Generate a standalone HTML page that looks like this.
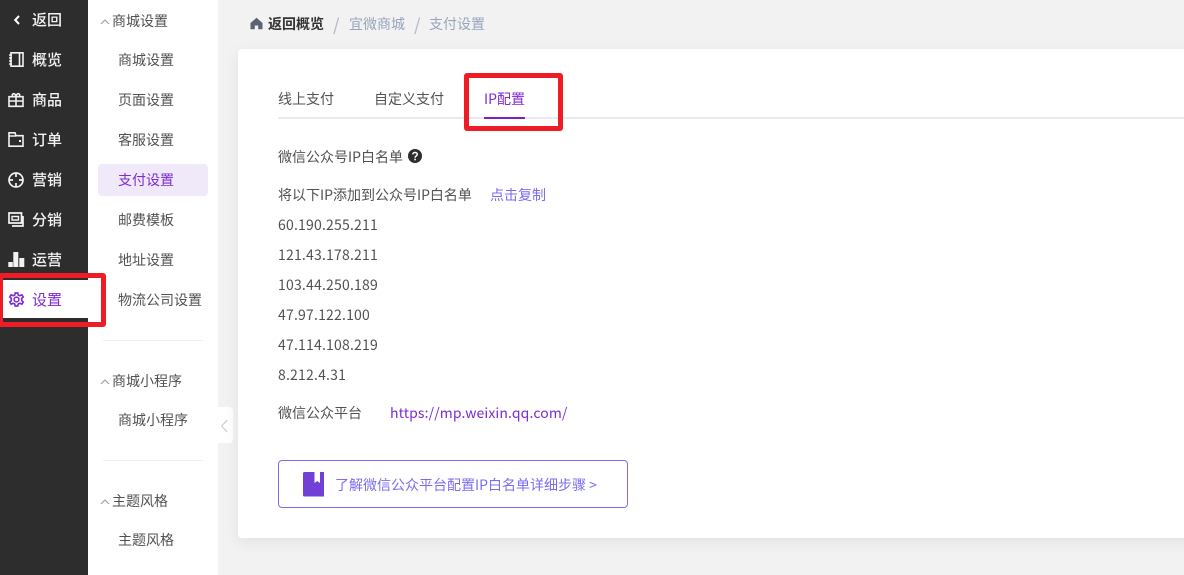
<!DOCTYPE html>
<html lang="zh"><head><meta charset="utf-8"><title>IP配置</title>
<style>
*{box-sizing:border-box}
html,body{margin:0;padding:0}
body{width:1184px;height:575px;position:relative;overflow:hidden;background:#f2f2f2;font-family:"Noto Sans CJK SC","Liberation Sans",sans-serif;font-size:14px;color:#515a6e}
.a{position:absolute;white-space:nowrap;line-height:20px}
.side{position:absolute;left:0;top:0;width:88px;height:575px;background:#2d2d2d}
.sub{position:absolute;left:88px;top:0;width:130px;height:575px;background:#fff}
.m{color:#f4f4f4;left:32px;font-size:15px;font-weight:500}
.s{color:#515151;left:118px}
.h{color:#515151;left:112px}
.ic{position:absolute;overflow:visible}
.card{position:absolute;left:238px;top:49px;width:960px;height:489px;background:#fff;border-radius:4px;box-shadow:0 4px 16px rgba(0,0,0,.07)}
.t{color:#515151}
.ip{color:#515151;left:278px;letter-spacing:.2px}
.red{position:absolute;border:5px solid #ee1c25;border-radius:3px}
</style></head><body>
<div class="side"></div>
<div class="sub"></div>

<svg class="ic" style="left:13px;top:15px" width="8" height="10" viewBox="0 0 8 10"><path d="M6 1L2.200 5L6 9" fill="none" stroke="#fff" stroke-width="2"/></svg>
<div class="a m" style="top:10px">返回</div>

<svg class="ic" style="left:8px;top:52px" width="16" height="15" viewBox="0 0 16 15"><path d="M3 .8H15V14.200H3ZM11.500 1V14M1 3H4M1 6H4M1 9H4M1 12H4" fill="none" stroke="#f2f2f2" stroke-width="1.600"/></svg>
<div class="a m" style="top:50px">概览</div>

<svg class="ic" style="left:8px;top:92px" width="16" height="15" viewBox="0 0 16 15"><path d="M1 4.700H15V14.300H1ZM1 9H15M8 2V14.300M4.500 4.500C3.500 1 7 .5 8 4.500C9 .5 12.500 1 11.500 4.500" fill="none" stroke="#f2f2f2" stroke-width="1.600"/></svg>
<div class="a m" style="top:90px">商品</div>

<svg class="ic" style="left:8px;top:132px" width="16" height="15" viewBox="0 0 16 15"><path d="M1 14.200V.8H7L8 3.700H15V14.200ZM1 4H8" fill="none" stroke="#f2f2f2" stroke-width="1.600"/><rect x="11" y="8" width="2" height="2" fill="#f2f2f2"/></svg>
<div class="a m" style="top:130px">订单</div>

<svg class="ic" style="left:8px;top:172px" width="16" height="16" viewBox="0 0 16 16"><circle cx="8" cy="8" r="7" fill="none" stroke="#f2f2f2" stroke-width="1.700"/><path d="M8 1V5M8 11V15M1 8H5M11 8H15" stroke="#f2f2f2" stroke-width="1.700"/></svg>
<div class="a m" style="top:170px">营销</div>

<svg class="ic" style="left:8px;top:212px" width="16" height="15" viewBox="0 0 16 15"><path d="M1 1H13.500V11H1ZM15 4V14H4" fill="none" stroke="#f2f2f2" stroke-width="1.700"/><path d="M4 4.500H10.500V8H4Z" fill="none" stroke="#f2f2f2" stroke-width="1.400"/></svg>
<div class="a m" style="top:210px">分销</div>

<svg class="ic" style="left:8px;top:252px" width="17" height="15" viewBox="0 0 17 15"><rect x="0.300" y="10" width="4.500" height="5" fill="#f2f2f2"/><rect x="5.300" y="0" width="5" height="15" fill="#f2f2f2"/><rect x="11.300" y="6" width="5" height="9" fill="#f2f2f2"/></svg>
<div class="a m" style="top:250px">运营</div>

<div class="a" style="left:2px;top:280px;width:86px;height:38px;background:#fff"></div>
<svg class="ic" style="left:9px;top:292px" width="15" height="15" viewBox="0 0 24 24"><path d="M10 1.500H14L14.800 4.800L17.500 6L20.600 4.500L22.800 8L20.300 10.200V13.800L22.800 16L20.600 19.500L17.500 18L14.800 19.200L14 22.500H10L9.200 19.200L6.500 18L3.400 19.500L1.200 16L3.700 13.800V10.200L1.200 8L3.400 4.500L6.500 6L9.200 4.800Z" fill="none" stroke="#7c2bd0" stroke-width="2.600"/><circle cx="12" cy="12" r="3.800" fill="none" stroke="#7c2bd0" stroke-width="2.400"/></svg>
<div class="a" style="left:32px;top:290px;color:#7c2bd0;font-size:15px">设置</div>
<div class="red" style="left:-2px;top:273px;width:108px;height:54px"></div>

<svg class="ic" style="left:100px;top:18px" width="10" height="7" viewBox="0 0 10 7"><path d="M1 6L5 2L9 6" fill="none" stroke="#999" stroke-width="1"/></svg>
<div class="a h" style="top:11px">商城设置</div>
<div class="a s" style="top:50px">商城设置</div>
<div class="a s" style="top:90px">页面设置</div>
<div class="a s" style="top:130px">客服设置</div>
<div class="a" style="left:98px;top:164px;width:110px;height:32px;background:#f0e9fa;border-radius:4px"></div>
<div class="a s" style="top:170px;color:#7c2bd0">支付设置</div>
<div class="a s" style="top:210px">邮费模板</div>
<div class="a s" style="top:250px">地址设置</div>
<div class="a s" style="top:290px">物流公司设置</div>
<div class="a" style="left:103px;top:340px;width:100px;height:1px;background:#eeeef4"></div>
<svg class="ic" style="left:100px;top:378px" width="10" height="7" viewBox="0 0 10 7"><path d="M1 6L5 2L9 6" fill="none" stroke="#999" stroke-width="1"/></svg>
<div class="a h" style="top:371px">商城小程序</div>
<div class="a s" style="top:410px">商城小程序</div>
<div class="a" style="left:103px;top:460px;width:100px;height:1px;background:#eeeef4"></div>
<svg class="ic" style="left:100px;top:498px" width="10" height="7" viewBox="0 0 10 7"><path d="M1 6L5 2L9 6" fill="none" stroke="#999" stroke-width="1"/></svg>
<div class="a h" style="top:491px">主题风格</div>
<div class="a s" style="top:530px">主题风格</div>

<div class="a" style="left:218px;top:407px;width:15px;height:36px;background:#fff;border-radius:0 4px 4px 0"></div>
<svg class="ic" style="left:220px;top:419px" width="9" height="14" viewBox="0 0 9 14"><path d="M7.500 1L1.500 7L7.500 13" fill="none" stroke="#c8c8c8" stroke-width="1"/></svg>

<svg class="ic" style="left:250px;top:17px" width="13" height="13" viewBox="0 0 13 13"><path d="M6.500 .8L12.500 6V12.300H8.200V8.500H4.800V12.300H.5V6Z" fill="#5b6270"/></svg>
<div class="a" style="left:268px;top:14px;color:#333;font-weight:700;font-size:14px">返回概览</div>
<div class="a" style="left:333px;top:14px;color:#b6bec9;font-size:17px;font-weight:500">/</div>
<div class="a" style="left:349px;top:14px;color:#98a5bd">宜微商城</div>
<div class="a" style="left:414px;top:14px;color:#b6bec9;font-size:17px;font-weight:500">/</div>
<div class="a" style="left:429px;top:14px;color:#98a5bd">支付设置</div>

<div class="card"></div>
<div class="a t" style="left:278px;top:89px">线上支付</div>
<div class="a t" style="left:374px;top:89px">自定义支付</div>
<div class="a" style="left:484px;top:89px;color:#7c2bd0">IP配置</div>
<div class="a" style="left:278px;top:117px;width:906px;height:2px;background:#e8eaef"></div>
<div class="a" style="left:484px;top:117px;width:41px;height:2px;background:#7c1fc9"></div>
<div class="red" style="left:464px;top:73px;width:99px;height:58px"></div>

<div class="a t" style="left:278px;top:147px">微信公众号IP白名单</div>
<svg class="ic" style="left:408px;top:149px" width="14" height="14" viewBox="0 0 14 14"><circle cx="7" cy="7" r="7" fill="#2e2e2e"/><path d="M4.800 5.400C4.800 2.800 9.300 2.900 9.300 5.300C9.300 7 7.100 6.900 7.100 8.700" fill="none" stroke="#fff" stroke-width="1.500"/><rect x="6.300" y="9.700" width="1.600" height="1.600" fill="#fff"/></svg>

<div class="a t" style="left:278px;top:185px">将以下IP添加到公众号IP白名单</div>
<div class="a" style="left:490px;top:185px;font-size:14px;color:#7b6cf0">点击复制</div>

<div class="a ip" style="top:215px">60.190.255.211</div>
<div class="a ip" style="top:245px">121.43.178.211</div>
<div class="a ip" style="top:275px">103.44.250.189</div>
<div class="a ip" style="top:305px">47.97.122.100</div>
<div class="a ip" style="top:335px">47.114.108.219</div>
<div class="a ip" style="top:365px">8.212.4.31</div>

<div class="a t" style="left:278px;top:403px">微信公众平台</div>
<div class="a" style="left:390px;top:403px;color:#7c2bd0;letter-spacing:.12px">https://mp.weixin.qq.com/</div>

<div class="a" style="left:278px;top:460px;width:350px;height:48px;border:1px solid #7b6cf0;border-radius:4px;background:#fff"></div>
<svg class="ic" style="left:303px;top:472px" width="24" height="25" viewBox="0 0 24 25"><path d="M1.500 0H21V24.500H1.500Q0 24.500 0 23V1.500Q0 0 1.500 0Z" fill="#7340d6"/><path d="M11.500 0H17V11L14.200 9L11.500 11Z" fill="#fff"/><rect x="21" y="0" width="1" height="24.500" fill="#fff"/></svg>
<div class="a" style="left:335px;top:475px;color:#7b6cf0">了解微信公众平台配置IP白名单详细步骤 &gt;</div>
</body></html>
